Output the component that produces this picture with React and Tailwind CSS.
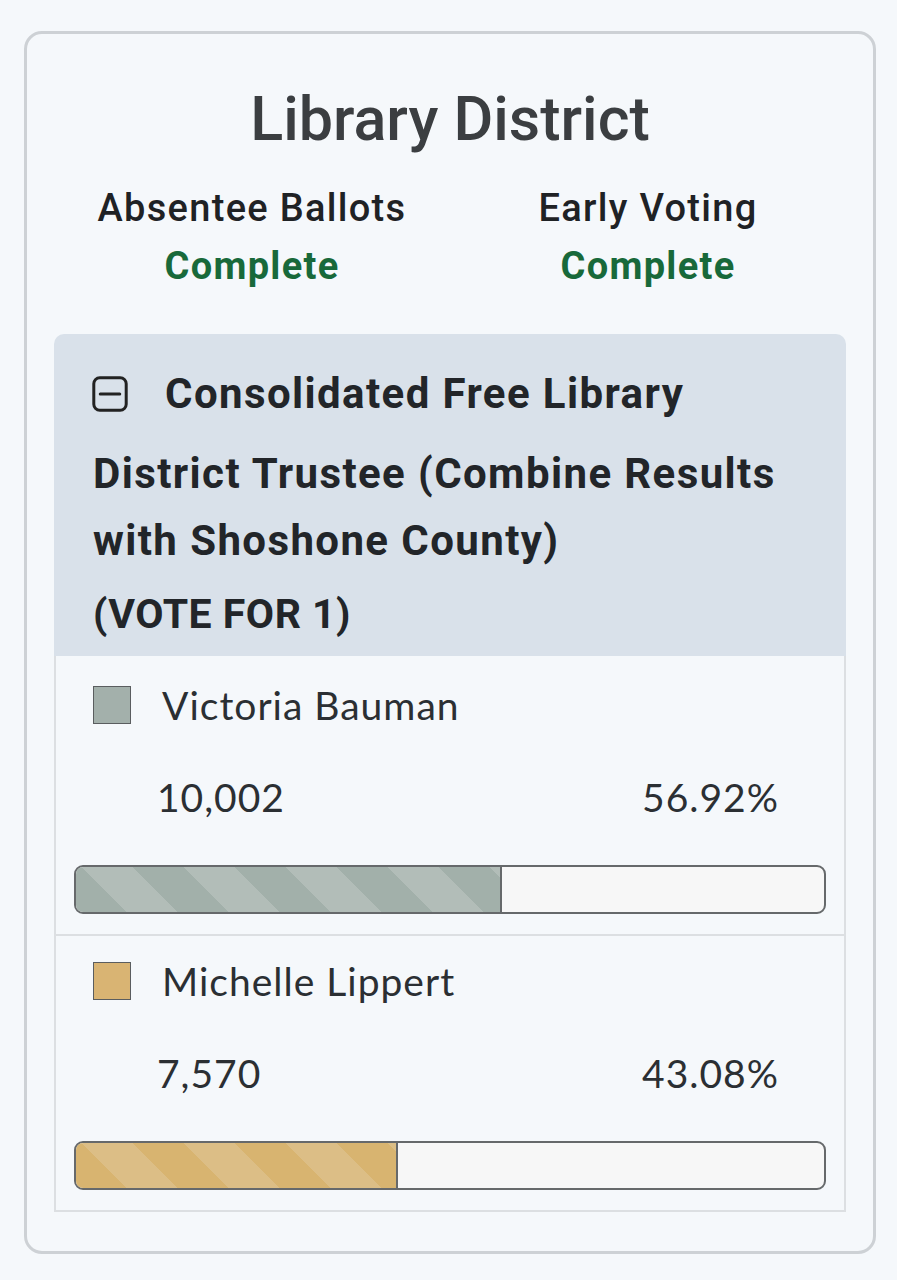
import React from "react";

const candidates = [
  {
    name: "Victoria Bauman",
    votes: "10,002",
    pct: "56.92%",
    width: 56.92,
    swatch: "bg-[#a3b0ab]",
    fill: "bg-[repeating-linear-gradient(45deg,#a2b0aa_0px,#a2b0aa_36px,#b2bdb8_36px,#b2bdb8_72px)]",
  },
  {
    name: "Michelle Lippert",
    votes: "7,570",
    pct: "43.08%",
    width: 43.08,
    swatch: "bg-[#d9b473]",
    fill: "bg-[repeating-linear-gradient(45deg,#d8b470_0px,#d8b470_36px,#dcbe86_36px,#dcbe86_72px)]",
  },
];

function MinusSquare() {
  return (
    <svg
      viewBox="0 0 24 24"
      className="inline-block h-[36px] w-[36px] align-[-4px] ml-[-1px] mr-[37px]"
      fill="none"
      stroke="#222"
      strokeWidth="2"
      strokeLinecap="round"
      strokeLinejoin="round"
    >
      <rect x="1.2" y="1.2" width="21.6" height="21.6" rx="4" />
      <path d="M5.5 12h13" />
    </svg>
  );
}

function CandidateRow({ c, first }) {
  return (
    <div
      className={`${first ? "pt-[26px] pb-[20px]" : "border-t-2 border-[#dcdfe2] pt-[22px] pb-[20px]"} px-[18px] font-['Lato',sans-serif] text-[#2b2f33]`}
    >
      <div className="flex h-[46px] items-center pl-[19px]">
        <span className={`h-[38px] w-[38px] border-[1.5px] border-[#5a5d5f] ${c.swatch}`} />
        <span className="ml-[31px] text-[39px] leading-[46px] tracking-[1px]">{c.name}</span>
      </div>
      <div className="mt-[46px] flex h-[46px] items-center justify-between pl-[83px] pr-[47px] text-[39px] leading-[46px] tracking-[1px]">
        <span>{c.votes}</span>
        <span>{c.pct}</span>
      </div>
      <div className="mt-[45px] flex h-[49px] overflow-hidden rounded-[9px] border-2 border-[#66696b] bg-[#f7f7f7]">
        <div
          className={`h-full border-r-2 border-[#66696b] ${c.fill}`}
          style={{ width: `${c.width}%` }}
        />
      </div>
    </div>
  );
}

export default function App() {
  return (
    <div className="min-h-screen bg-[#f5f8fb] pl-[24px] pr-[21px] pt-[31px] pb-[28px]">
      <div className="rounded-[18px] border-[3px] border-[#cdd1d5] bg-[#f5f8fb] px-[27px] pt-[52px] pb-[39px] font-['Roboto',sans-serif]">
        <h1 className="text-center text-[61px] font-medium leading-[66px] text-[#3b3e41]">
          Library District
        </h1>
        <div className="mt-[27px] grid grid-cols-2 text-center text-[38px] font-medium leading-[58px] tracking-[1.3px]">
          <div>
            <div className="text-[#1f2225]">Absentee Ballots</div>
            <div className="font-bold text-[#18693a]">Complete</div>
          </div>
          <div>
            <div className="text-[#1f2225]">Early Voting</div>
            <div className="font-bold text-[#18693a]">Complete</div>
          </div>
        </div>
        <div className="mt-[39px] overflow-hidden rounded-t-[10px]">
          <div className="bg-[#d9e1ea] pl-[39px] pr-[36px] pt-[13px] pb-[17px] text-[#222529]">
            <h2 className="text-[42px] font-bold leading-[67px] tracking-[1.4px] first-line:leading-[93px]">
              <MinusSquare />
              Consolidated Free Library District Trustee (Combine Results with Shoshone County)
            </h2>
            <div className="mt-[15px] text-[41px] font-bold leading-[50px] tracking-[0.5px]">(VOTE FOR 1)</div>
          </div>
          <div className="border-x-2 border-b-2 border-[#dcdfe2]">
            {candidates.map((c, i) => (
              <CandidateRow key={c.name} c={c} first={i === 0} />
            ))}
          </div>
        </div>
      </div>
    </div>
  );
}
